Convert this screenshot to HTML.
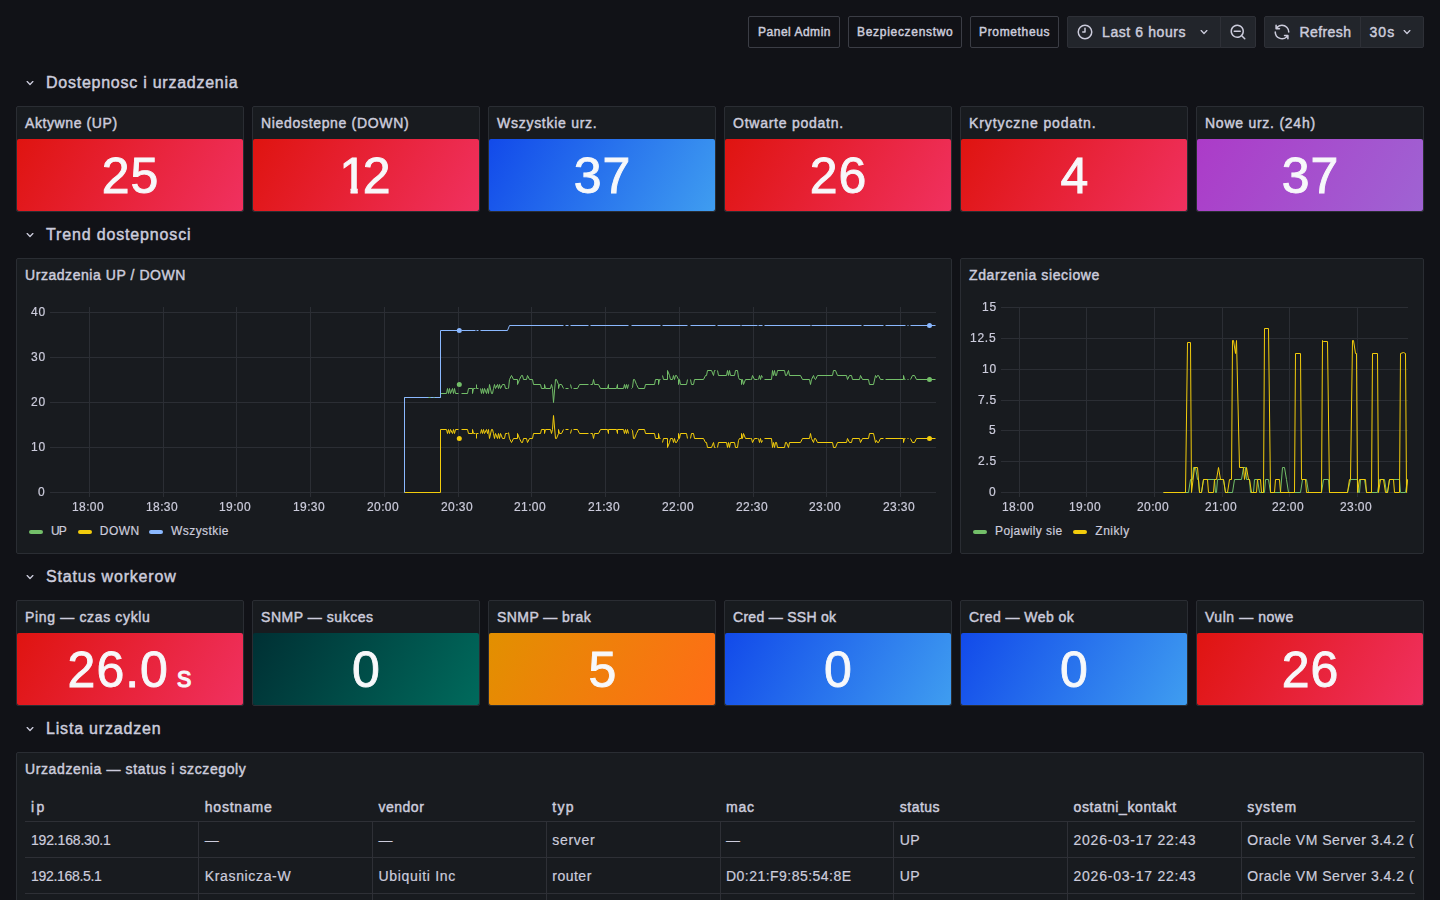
<!DOCTYPE html><html><head><meta charset="utf-8"><title>Dashboard</title><style>
*{box-sizing:border-box;margin:0;padding:0}
html,body{width:1440px;height:900px;overflow:hidden;background:#111217;
 font-family:"Liberation Sans",sans-serif;color:#ccccdc}
#root{position:relative;width:1440px;height:900px;overflow:hidden;background:#111217}
.t{position:absolute;white-space:nowrap;display:block}
.ax{will-change:transform;-webkit-text-stroke:0.2px currentColor}
.m{font-weight:400;-webkit-text-stroke:0.45px currentColor}
.r{font-weight:400;-webkit-text-stroke:0.2px currentColor}
.b{font-weight:700}
.panel{position:absolute;background:#181b1f;border:1px solid #2a2d33;border-radius:2px}
.fill{position:absolute;left:0;right:0;bottom:0;top:32px;border-radius:2px}
.big{-webkit-text-stroke:0.9px currentColor}
.btn{position:absolute;top:16px;height:32px;background:#22252b;border:1px solid #2e3037}
.lnk{position:absolute;top:16px;height:32px;border:1px solid #3b3d45;border-radius:2px}
svg{position:absolute;overflow:visible}
.ic{fill:#ccccdc}
</style></head><body><div id="root">
<div class="lnk" style="left:748px;width:92px"></div>
<div class="lnk" style="left:848px;width:114px"></div>
<div class="lnk" style="left:970px;width:89px"></div>
<span id="l1" class="t m" style="left:758px;top:23.00px;font-size:12px;line-height:18px;letter-spacing:0.51px;color:#ccccdc;">Panel Admin</span>
<span id="l2" class="t m" style="left:857px;top:23.00px;font-size:12px;line-height:18px;letter-spacing:0.698px;color:#ccccdc;">Bezpieczenstwo</span>
<span id="l3" class="t m" style="left:979px;top:23.00px;font-size:12px;line-height:18px;letter-spacing:0.656px;color:#ccccdc;">Prometheus</span>
<div class="btn" style="left:1067px;width:154px;border-radius:2px 0 0 2px"></div>
<div class="btn" style="left:1220px;width:36px;border-radius:0 2px 2px 0"></div>
<div class="btn" style="left:1264px;width:97px;border-radius:2px 0 0 2px"></div>
<div class="btn" style="left:1360px;width:64px;border-radius:0 2px 2px 0"></div>
<svg class="ic" style="left:1076.0px;top:23.0px" width="18" height="18" viewBox="0 0 24 24"><path d="M12,2A10,10,0,1,0,22,12,10.01114,10.01114,0,0,0,12,2Zm0,18a8,8,0,1,1,8-8A8.00917,8.00917,0,0,1,12,20ZM12,6a.99974.99974,0,0,0-1,1v4H9a1,1,0,0,0,0,2h3a.99974.99974,0,0,0,1-1V7A.99974.99974,0,0,0,12,6Z"/></svg>
<span id="tp" class="t m" style="left:1102px;top:22.00px;font-size:14px;line-height:20px;letter-spacing:0.59px;color:#ccccdc;">Last 6 hours</span>
<svg class="ic" style="left:1195.8px;top:24.299999999999997px" width="16" height="16" viewBox="0 0 24 24"><path d="M17,9.17a1,1,0,0,0-1.41,0L12,12.71,8.46,9.17a1,1,0,0,0-1.41,0,1,1,0,0,0,0,1.42l4.24,4.24a1,1,0,0,0,1.42,0L17,10.59A1,1,0,0,0,17,9.17Z"/></svg>
<svg class="ic" style="left:1229.0px;top:23.0px" width="18" height="18" viewBox="0 0 24 24"><path d="M21.71,20.29,18,16.61A9,9,0,1,0,16.61,18l3.68,3.68a1,1,0,0,0,1.42,0A1,1,0,0,0,21.71,20.29ZM11,18a7,7,0,1,1,7-7A7,7,0,0,1,11,18Zm4-8H7a1,1,0,0,0,0,2h8a1,1,0,0,0,0-2Z"/></svg>
<svg class="ic" style="left:1272.7px;top:23.0px" width="18" height="18" viewBox="0 0 24 24"><path d="M19.91,15.51H15.38a1,1,0,0,0,0,2h2.4A8,8,0,0,1,4,12a1,1,0,0,0-2,0,10,10,0,0,0,16.88,7.23V21a1,1,0,0,0,2,0V16.5A1,1,0,0,0,19.91,15.51ZM12,2A10,10,0,0,0,5.12,4.77V3a1,1,0,0,0-2,0V7.5a1,1,0,0,0,1,1h4.5a1,1,0,0,0,0-2H6.22A8,8,0,0,1,20,12a1,1,0,0,0,2,0A10,10,0,0,0,12,2Z"/></svg>
<span id="rf" class="t m" style="left:1299.5px;top:22.00px;font-size:14px;line-height:20px;letter-spacing:0.417px;color:#ccccdc;">Refresh</span>
<span id="iv" class="t m" style="left:1369.5px;top:22.00px;font-size:14px;line-height:20px;letter-spacing:1.05px;color:#ccccdc;">30s</span>
<svg class="ic" style="left:1399.3px;top:24.299999999999997px" width="16" height="16" viewBox="0 0 24 24"><path d="M17,9.17a1,1,0,0,0-1.41,0L12,12.71,8.46,9.17a1,1,0,0,0-1.41,0,1,1,0,0,0,0,1.42l4.24,4.24a1,1,0,0,0,1.42,0L17,10.59A1,1,0,0,0,17,9.17Z"/></svg>
<svg class="ic" style="left:22.0px;top:75.0px" width="16" height="16" viewBox="0 0 24 24"><path d="M17,9.17a1,1,0,0,0-1.41,0L12,12.71,8.46,9.17a1,1,0,0,0-1.41,0,1,1,0,0,0,0,1.42l4.24,4.24a1,1,0,0,0,1.42,0L17,10.59A1,1,0,0,0,17,9.17Z"/></svg>
<span id="r1" class="t m" style="left:46px;top:72.30px;font-size:16px;line-height:22px;letter-spacing:0.749px;color:#ccccdc;">Dostepnosc i urzadzenia</span>
<svg class="ic" style="left:22.0px;top:227.0px" width="16" height="16" viewBox="0 0 24 24"><path d="M17,9.17a1,1,0,0,0-1.41,0L12,12.71,8.46,9.17a1,1,0,0,0-1.41,0,1,1,0,0,0,0,1.42l4.24,4.24a1,1,0,0,0,1.42,0L17,10.59A1,1,0,0,0,17,9.17Z"/></svg>
<span id="r2" class="t m" style="left:46px;top:224.30px;font-size:16px;line-height:22px;letter-spacing:0.844px;color:#ccccdc;">Trend dostepnosci</span>
<svg class="ic" style="left:22.0px;top:569.0px" width="16" height="16" viewBox="0 0 24 24"><path d="M17,9.17a1,1,0,0,0-1.41,0L12,12.71,8.46,9.17a1,1,0,0,0-1.41,0,1,1,0,0,0,0,1.42l4.24,4.24a1,1,0,0,0,1.42,0L17,10.59A1,1,0,0,0,17,9.17Z"/></svg>
<span id="r3" class="t m" style="left:46px;top:566.30px;font-size:16px;line-height:22px;letter-spacing:0.82px;color:#ccccdc;">Status workerow</span>
<svg class="ic" style="left:22.0px;top:721.0px" width="16" height="16" viewBox="0 0 24 24"><path d="M17,9.17a1,1,0,0,0-1.41,0L12,12.71,8.46,9.17a1,1,0,0,0-1.41,0,1,1,0,0,0,0,1.42l4.24,4.24a1,1,0,0,0,1.42,0L17,10.59A1,1,0,0,0,17,9.17Z"/></svg>
<span id="r4" class="t m" style="left:46px;top:718.30px;font-size:16px;line-height:22px;letter-spacing:0.808px;color:#ccccdc;">Lista urzadzen</span>
<div class="panel" style="left:16px;top:106px;width:228px;height:106px"><div class="fill" style="background:linear-gradient(120deg,rgb(223,20,16),rgb(240,49,96))"></div></div>
<span id="s1t" class="t m" style="left:25px;top:112.80px;font-size:14px;line-height:20px;letter-spacing:0.592px;color:#ccccdc;">Aktywne (UP)</span>
<span id="s1v" class="t m big" style="left:-169.50px;width:600px;text-align:center;top:146px;font-size:50px;line-height:60px;color:#f7f8fa;letter-spacing:1px">25</span>
<div class="panel" style="left:252px;top:106px;width:228px;height:106px"><div class="fill" style="background:linear-gradient(120deg,rgb(223,20,16),rgb(240,49,96))"></div></div>
<span id="s2t" class="t m" style="left:261px;top:112.80px;font-size:14px;line-height:20px;letter-spacing:0.676px;color:#ccccdc;">Niedostepne (DOWN)</span>
<span id="s2v" class="t m big" style="left:65.50px;width:600px;text-align:center;top:146px;font-size:50px;line-height:60px;color:#f7f8fa;letter-spacing:1px"><span style="display:inline-block;letter-spacing:0;margin-right:-4.3px;clip-path:polygon(0 0,28px 0,28px 41.5px,18.4px 41.5px,18.4px 60px,11.2px 60px,11.2px 41.5px,0 41.5px)">1</span>2</span>
<div class="panel" style="left:488px;top:106px;width:228px;height:106px"><div class="fill" style="background:linear-gradient(120deg,rgb(18,74,234),rgb(63,157,240))"></div></div>
<span id="s3t" class="t m" style="left:497px;top:112.80px;font-size:14px;line-height:20px;letter-spacing:0.73px;color:#ccccdc;">Wszystkie urz.</span>
<span id="s3v" class="t m big" style="left:302.50px;width:600px;text-align:center;top:146px;font-size:50px;line-height:60px;color:#f7f8fa;letter-spacing:1px">37</span>
<div class="panel" style="left:724px;top:106px;width:228px;height:106px"><div class="fill" style="background:linear-gradient(120deg,rgb(223,20,16),rgb(240,49,96))"></div></div>
<span id="s4t" class="t m" style="left:733px;top:112.80px;font-size:14px;line-height:20px;letter-spacing:0.749px;color:#ccccdc;">Otwarte podatn.</span>
<span id="s4v" class="t m big" style="left:538.50px;width:600px;text-align:center;top:146px;font-size:50px;line-height:60px;color:#f7f8fa;letter-spacing:1px">26</span>
<div class="panel" style="left:960px;top:106px;width:228px;height:106px"><div class="fill" style="background:linear-gradient(120deg,rgb(223,20,16),rgb(240,49,96))"></div></div>
<span id="s5t" class="t m" style="left:969px;top:112.80px;font-size:14px;line-height:20px;letter-spacing:0.906px;color:#ccccdc;">Krytyczne podatn.</span>
<span id="s5v" class="t m big" style="left:775.00px;width:600px;text-align:center;top:146px;font-size:50px;line-height:60px;color:#f7f8fa;letter-spacing:1px">4</span>
<div class="panel" style="left:1196px;top:106px;width:228px;height:106px"><div class="fill" style="background:linear-gradient(120deg,rgb(172,59,200),rgb(159,99,211))"></div></div>
<span id="s6t" class="t m" style="left:1205px;top:112.80px;font-size:14px;line-height:20px;letter-spacing:0.749px;color:#ccccdc;">Nowe urz. (24h)</span>
<span id="s6v" class="t m big" style="left:1010.50px;width:600px;text-align:center;top:146px;font-size:50px;line-height:60px;color:#f7f8fa;letter-spacing:1px">37</span>
<div class="panel" style="left:16px;top:600px;width:228px;height:106px"><div class="fill" style="background:linear-gradient(120deg,rgb(223,20,16),rgb(240,49,96))"></div></div>
<span id="w1t" class="t m" style="left:25px;top:606.80px;font-size:14px;line-height:20px;letter-spacing:0.658px;color:#ccccdc;">Ping — czas cyklu</span>
<span id="w1v" class="t m big" style="left:-170.50px;width:600px;text-align:center;top:640px;font-size:50px;line-height:60px;color:#f7f8fa;letter-spacing:1px">26.0<span style="font-size:29px;margin-left:8px;letter-spacing:0">s</span></span>
<div class="panel" style="left:252px;top:600px;width:228px;height:106px"><div class="fill" style="background:linear-gradient(120deg,rgb(0,48,52),rgb(0,106,92))"></div></div>
<span id="w2t" class="t m" style="left:261px;top:606.80px;font-size:14px;line-height:20px;letter-spacing:0.542px;color:#ccccdc;">SNMP — sukces</span>
<span id="w2v" class="t m big" style="left:66.50px;width:600px;text-align:center;top:640px;font-size:50px;line-height:60px;color:#f7f8fa;letter-spacing:1px">0</span>
<div class="panel" style="left:488px;top:600px;width:228px;height:106px"><div class="fill" style="background:linear-gradient(120deg,rgb(226,144,0),rgb(255,108,23))"></div></div>
<span id="w3t" class="t m" style="left:497px;top:606.80px;font-size:14px;line-height:20px;letter-spacing:0.45px;color:#ccccdc;">SNMP — brak</span>
<span id="w3v" class="t m big" style="left:303.00px;width:600px;text-align:center;top:640px;font-size:50px;line-height:60px;color:#f7f8fa;letter-spacing:1px">5</span>
<div class="panel" style="left:724px;top:600px;width:228px;height:106px"><div class="fill" style="background:linear-gradient(120deg,rgb(18,74,234),rgb(63,157,240))"></div></div>
<span id="w4t" class="t m" style="left:733px;top:606.80px;font-size:14px;line-height:20px;letter-spacing:0.292px;color:#ccccdc;">Cred — SSH ok</span>
<span id="w4v" class="t m big" style="left:538.50px;width:600px;text-align:center;top:640px;font-size:50px;line-height:60px;color:#f7f8fa;letter-spacing:1px">0</span>
<div class="panel" style="left:960px;top:600px;width:228px;height:106px"><div class="fill" style="background:linear-gradient(120deg,rgb(18,74,234),rgb(63,157,240))"></div></div>
<span id="w5t" class="t m" style="left:969px;top:606.80px;font-size:14px;line-height:20px;letter-spacing:0.459px;color:#ccccdc;">Cred — Web ok</span>
<span id="w5v" class="t m big" style="left:774.50px;width:600px;text-align:center;top:640px;font-size:50px;line-height:60px;color:#f7f8fa;letter-spacing:1px">0</span>
<div class="panel" style="left:1196px;top:600px;width:228px;height:106px"><div class="fill" style="background:linear-gradient(120deg,rgb(223,20,16),rgb(240,49,96))"></div></div>
<span id="w6t" class="t m" style="left:1205px;top:606.80px;font-size:14px;line-height:20px;letter-spacing:0.55px;color:#ccccdc;">Vuln — nowe</span>
<span id="w6v" class="t m big" style="left:1010.50px;width:600px;text-align:center;top:640px;font-size:50px;line-height:60px;color:#f7f8fa;letter-spacing:1px">26</span>
<div class="panel" style="left:16px;top:258px;width:936px;height:296px"></div>
<div class="panel" style="left:960px;top:258px;width:464px;height:296px"></div>
<span id="c1t" class="t m" style="left:25px;top:264.80px;font-size:14px;line-height:20px;letter-spacing:0.553px;color:#ccccdc;">Urzadzenia UP / DOWN</span>
<span id="c2t" class="t m" style="left:969px;top:264.80px;font-size:14px;line-height:20px;letter-spacing:0.618px;color:#ccccdc;">Zdarzenia sieciowe</span>
<svg width="1440" height="900" style="left:0;top:0" viewBox="0 0 1440 900"><path d="M50,492.5H936M50,447.5H936M50,402.5H936M50,357.5H936M50,312.5H936M89.5,307V497M163.5,307V497M236.5,307V497M310.5,307V497M384.5,307V497M458.5,307V497M531.5,307V497M605.5,307V497M679.5,307V497M753.5,307V497M826.5,307V497M900.5,307V497" stroke="#2b2e34" stroke-width="1" fill="none" shape-rendering="crispEdges"/><path d="M404.5,492.5L404.5,397.5L440.5,397.5L440.5,393.5L446.5,393.5L447.5,388.5L448.5,393.5L449.5,388.5L450.5,393.5L452.5,388.5L453.5,393.5L454.5,388.5L455.5,393.5L458.5,393.5M461.5,393.5L467.5,393.5L468.5,388.5L472.5,388.5L472.5,393.5L473.5,388.5L475.5,388.5M476.5,384.5L476.5,388.5L478.5,388.5M480.5,388.5L481.5,393.5L482.5,388.5L483.5,393.5L484.5,388.5L486.5,393.5L487.5,388.5L488.5,393.5L489.5,384.5L491.5,393.5L492.5,393.5L493.5,388.5L494.5,384.5L495.5,388.5L497.5,384.5L498.5,388.5L499.5,384.5L500.5,388.5L502.5,384.5L504.5,384.5L505.5,388.5L507.5,388.5M508.5,388.5L509.5,379.5L511.5,375.5L513.5,379.5L517.5,379.5L517.5,384.5L519.5,379.5L521.5,375.5L522.5,375.5L523.5,379.5L526.5,379.5L527.5,375.5L529.5,379.5L532.5,379.5L533.5,384.5L540.5,384.5L541.5,388.5L544.5,388.5L544.5,384.5L545.5,388.5L550.5,388.5L551.5,384.5L552.5,388.5L553.5,402.5L555.5,379.5L556.5,379.5L558.5,384.5L558.5,388.5L559.5,384.5L561.5,384.5L563.5,388.5M565.5,388.5L568.5,388.5M570.5,384.5L571.5,388.5M573.5,388.5L577.5,388.5L579.5,384.5L588.5,384.5M590.5,384.5L592.5,384.5L593.5,379.5L594.5,384.5L598.5,384.5L600.5,388.5L607.5,388.5L608.5,384.5L608.5,388.5L616.5,388.5L617.5,384.5L617.5,388.5L623.5,388.5L624.5,384.5L625.5,388.5L626.5,384.5L627.5,388.5L628.5,384.5M631.5,388.5L632.5,387.5L633.5,379.5L634.5,379.5L636.5,384.5L638.5,388.5L644.5,388.5L645.5,384.5L654.5,384.5L655.5,379.5L658.5,379.5L658.5,384.5L659.5,379.5L660.5,379.5M662.5,375.5L663.5,379.5L667.5,379.5L667.5,370.5L669.5,375.5L670.5,379.5L672.5,379.5L673.5,375.5L674.5,379.5L675.5,375.5L676.5,375.5L678.5,379.5L678.5,384.5L679.5,379.5L680.5,384.5L686.5,384.5L687.5,379.5M690.5,379.5L691.5,384.5L693.5,384.5L694.5,379.5L703.5,379.5L705.5,375.5L706.5,375.5L707.5,370.5L711.5,370.5L713.5,375.5L714.5,370.5L715.5,370.5M717.5,370.5L718.5,375.5L726.5,375.5L727.5,370.5L728.5,375.5L729.5,370.5L730.5,375.5L734.5,375.5L735.5,370.5L737.5,370.5L738.5,377.5L739.5,379.5L741.5,379.5L741.5,384.5L742.5,379.5L743.5,384.5L745.5,379.5L750.5,379.5L751.5,379.5L752.5,375.5L754.5,379.5L757.5,379.5M758.5,379.5L759.5,375.5L760.5,379.5L761.5,375.5L762.5,377.5M764.5,379.5L771.5,379.5L772.5,370.5L773.5,375.5L774.5,370.5L775.5,375.5L776.5,375.5L777.5,370.5L784.5,370.5L785.5,375.5L786.5,375.5L788.5,370.5L789.5,375.5L800.5,375.5L802.5,379.5L809.5,379.5L810.5,384.5L811.5,379.5L813.5,375.5L814.5,378.5L815.5,379.5L817.5,375.5L832.5,375.5L833.5,370.5L835.5,370.5L837.5,375.5L846.5,375.5L847.5,379.5L849.5,375.5L851.5,375.5L852.5,379.5L859.5,379.5L860.5,375.5L862.5,379.5L868.5,379.5L869.5,384.5L873.5,384.5L875.5,375.5L876.5,377.5L877.5,375.5L878.5,375.5L880.5,379.5L883.5,379.5M885.5,379.5L903.5,379.5L903.5,375.5L904.5,379.5L905.5,379.5M907.5,379.5L908.5,379.5M910.5,379.5L912.5,375.5L914.5,375.5L916.5,379.5L935.5,379.5" stroke="#73bf69" stroke-width="1" fill="none" stroke-linejoin="round"/><path d="M404.5,492.5L440.5,492.5L440.5,429.5L446.5,429.5L447.5,433.5L448.5,429.5L449.5,433.5L450.5,429.5L452.5,433.5L453.5,429.5L454.5,433.5L455.5,429.5L458.5,429.5M461.5,429.5L467.5,429.5L468.5,433.5L472.5,433.5L472.5,429.5L473.5,433.5L475.5,433.5M476.5,438.5L476.5,433.5L478.5,433.5M480.5,433.5L481.5,429.5L482.5,433.5L483.5,429.5L484.5,433.5L486.5,429.5L487.5,433.5L488.5,429.5L489.5,438.5L491.5,429.5L492.5,429.5L493.5,433.5L494.5,438.5L495.5,433.5L497.5,438.5L498.5,433.5L499.5,438.5L500.5,433.5L502.5,438.5L504.5,438.5L505.5,433.5L507.5,433.5M508.5,432.5L509.5,438.5L511.5,442.5L513.5,438.5L517.5,438.5L517.5,433.5L519.5,438.5L521.5,442.5L522.5,442.5L523.5,438.5L526.5,438.5L527.5,442.5L529.5,438.5L532.5,438.5L533.5,433.5L540.5,433.5L541.5,429.5L544.5,429.5L544.5,433.5L545.5,429.5L550.5,429.5L551.5,433.5L552.5,429.5L553.5,415.5L555.5,438.5L556.5,438.5L558.5,433.5L558.5,429.5L559.5,433.5L561.5,433.5L563.5,429.5M565.5,429.5L568.5,429.5M570.5,433.5L571.5,429.5M573.5,429.5L577.5,429.5L579.5,433.5L588.5,433.5M590.5,433.5L592.5,433.5L593.5,438.5L594.5,433.5L598.5,433.5L600.5,429.5L607.5,429.5L608.5,433.5L608.5,429.5L616.5,429.5L617.5,433.5L617.5,429.5L623.5,429.5L624.5,433.5L625.5,429.5L626.5,433.5L627.5,429.5L628.5,433.5M631.5,429.5L632.5,430.5L633.5,438.5L634.5,438.5L636.5,433.5L638.5,429.5L644.5,429.5L645.5,433.5L654.5,433.5L655.5,438.5L658.5,438.5L658.5,433.5L659.5,438.5L660.5,438.5M662.5,442.5L663.5,438.5L667.5,438.5L667.5,447.5L669.5,442.5L670.5,438.5L672.5,438.5L673.5,442.5L674.5,438.5L675.5,442.5L676.5,442.5L678.5,438.5L678.5,433.5L679.5,438.5L680.5,433.5L686.5,433.5L687.5,438.5M690.5,438.5L691.5,433.5L693.5,433.5L694.5,438.5L703.5,438.5L705.5,442.5L706.5,442.5L707.5,447.5L711.5,447.5L713.5,442.5L714.5,447.5L715.5,447.5M717.5,447.5L718.5,442.5L726.5,442.5L727.5,447.5L728.5,442.5L729.5,447.5L730.5,442.5L734.5,442.5L735.5,447.5L737.5,447.5L738.5,440.5L739.5,438.5L741.5,438.5L741.5,433.5L742.5,438.5L743.5,433.5L745.5,438.5L750.5,438.5L751.5,438.5L752.5,442.5L754.5,438.5L757.5,438.5M758.5,438.5L759.5,442.5L760.5,438.5L761.5,442.5L762.5,440.5M764.5,438.5L771.5,438.5L772.5,447.5L773.5,442.5L774.5,447.5L775.5,442.5L776.5,442.5L777.5,447.5L784.5,447.5L785.5,442.5L786.5,442.5L788.5,447.5L789.5,442.5L800.5,442.5L802.5,438.5L809.5,438.5L810.5,433.5L811.5,438.5L813.5,442.5L814.5,438.5L815.5,438.5L817.5,442.5L832.5,442.5L833.5,447.5L835.5,447.5L837.5,442.5L846.5,442.5L847.5,438.5L849.5,442.5L851.5,442.5L852.5,438.5L859.5,438.5L860.5,442.5L862.5,438.5L868.5,438.5L869.5,433.5L873.5,433.5L875.5,442.5L876.5,440.5L877.5,442.5L878.5,442.5L880.5,438.5L883.5,438.5M885.5,438.5L903.5,438.5L903.5,442.5L904.5,438.5L905.5,438.5M907.5,438.5L908.5,438.5M910.5,438.5L912.5,442.5L914.5,442.5L916.5,438.5L935.5,438.5" stroke="#f2cc0c" stroke-width="1" fill="none" stroke-linejoin="round"/><path d="M404.5,492.5L404.5,397.5L428.5,397.5M430.5,397.5L433.5,397.5M434.5,397.5L440.5,397.5L440.5,330.5L458.5,330.5M461.5,330.5L475.5,330.5M476.5,330.5L478.5,330.5M480.5,330.5L507.5,330.5L509.5,325.5L563.5,325.5M565.5,325.5L568.5,325.5M570.5,325.5L588.5,325.5M590.5,325.5L628.5,325.5M631.5,325.5L660.5,325.5M662.5,325.5L687.5,325.5M690.5,325.5L715.5,325.5M717.5,325.5L740.5,325.5M741.5,325.5L757.5,325.5M758.5,325.5L762.5,325.5M764.5,325.5L810.5,325.5M811.5,325.5L861.5,325.5M863.5,325.5L883.5,325.5M885.5,325.5L905.5,325.5M907.5,325.5L908.5,325.5M910.5,325.5L935.5,325.5" stroke="#8ab8ff" stroke-width="1" fill="none" stroke-linejoin="round"/><circle cx="459.3" cy="384.5" r="2.5" fill="#73bf69"/><circle cx="459.3" cy="438.5" r="2.5" fill="#f2cc0c"/><circle cx="459.3" cy="330.5" r="2.5" fill="#8ab8ff"/><circle cx="929.5" cy="379.5" r="2.5" fill="#73bf69"/><circle cx="929.5" cy="438.5" r="2.5" fill="#f2cc0c"/><circle cx="929.5" cy="325.5" r="2.5" fill="#8ab8ff"/></svg>
<svg width="1440" height="900" style="left:0;top:0" viewBox="0 0 1440 900"><path d="M1001,492.5H1408M1001,461.5H1408M1001,430.5H1408M1001,400.5H1408M1001,369.5H1408M1001,338.5H1408M1001,307.5H1408M1019.5,307V497M1086.5,307V497M1154.5,307V497M1222.5,307V497M1289.5,307V497M1357.5,307V497" stroke="#2b2e34" stroke-width="1" fill="none" shape-rendering="crispEdges"/><path d="M1163.5,492.5L1188.5,492.5L1190.5,479.5L1192.5,479.5L1193.5,467.5L1195.5,467.5L1197.5,479.5L1198.5,479.5L1199.5,492.5L1201.5,492.5L1203.5,479.5L1214.5,479.5L1215.5,492.5L1216.5,492.5L1217.5,479.5L1223.5,479.5L1225.5,492.5L1232.5,492.5L1234.5,479.5L1241.5,479.5L1243.5,467.5L1245.5,467.5L1246.5,479.5L1249.5,479.5L1250.5,492.5L1253.5,492.5L1254.5,479.5L1257.5,479.5L1259.5,492.5L1264.5,492.5L1265.5,479.5L1268.5,479.5L1270.5,492.5L1280.5,492.5L1282.5,467.5L1284.5,467.5L1286.5,479.5L1288.5,492.5L1300.5,492.5L1302.5,479.5L1306.5,479.5L1308.5,492.5L1321.5,492.5L1323.5,479.5L1328.5,479.5L1329.5,492.5L1347.5,492.5L1350.5,479.5L1357.5,479.5L1358.5,492.5L1359.5,492.5L1360.5,479.5L1364.5,479.5L1366.5,492.5L1377.5,492.5L1379.5,479.5L1384.5,479.5L1386.5,492.5L1387.5,492.5L1389.5,479.5L1399.5,479.5L1400.5,492.5L1405.5,492.5L1407.5,479.5" stroke="#73bf69" stroke-width="1" fill="none" stroke-linejoin="round"/><path d="M1163.5,492.5L1185.5,492.5L1187.5,342.5L1190.5,342.5L1191.5,492.5L1194.5,467.5L1197.5,467.5L1199.5,492.5L1201.5,492.5L1203.5,479.5L1207.5,479.5L1208.5,492.5L1213.5,492.5L1214.5,479.5L1216.5,479.5L1218.5,467.5L1220.5,479.5L1223.5,479.5L1225.5,492.5L1227.5,492.5L1229.5,479.5L1231.5,479.5L1232.5,340.5L1233.5,340.5L1235.5,353.5L1236.5,340.5L1239.5,467.5L1243.5,467.5L1244.5,479.5L1246.5,467.5L1248.5,479.5L1249.5,479.5L1251.5,492.5L1256.5,492.5L1257.5,479.5L1260.5,479.5L1261.5,492.5L1263.5,492.5L1264.5,328.5L1268.5,328.5L1270.5,492.5L1274.5,492.5L1275.5,479.5L1279.5,479.5L1280.5,492.5L1294.5,492.5L1295.5,353.5L1300.5,353.5L1301.5,479.5L1305.5,479.5L1306.5,492.5L1321.5,492.5L1322.5,340.5L1323.5,341.5L1327.5,341.5L1329.5,492.5L1347.5,492.5L1349.5,479.5L1350.5,479.5L1352.5,340.5L1353.5,340.5L1355.5,353.5L1356.5,353.5L1357.5,492.5L1359.5,479.5L1365.5,479.5L1366.5,492.5L1371.5,492.5L1372.5,353.5L1377.5,353.5L1378.5,492.5L1380.5,479.5L1383.5,479.5L1385.5,492.5L1387.5,492.5L1389.5,479.5L1393.5,479.5L1394.5,492.5L1399.5,492.5L1400.5,353.5L1403.5,352.5L1405.5,353.5L1406.5,492.5L1407.5,479.5" stroke="#f2cc0c" stroke-width="1" fill="none" stroke-linejoin="round"/></svg>
<div style="position:absolute;left:29px;top:530px;width:14px;height:4px;border-radius:2px;background:#73bf69"></div>
<span id="lg1" class="t r" style="left:51px;top:521.50px;font-size:12px;line-height:18px;letter-spacing:-0.9px;color:#ccccdc;">UP</span>
<div style="position:absolute;left:78px;top:530px;width:14px;height:4px;border-radius:2px;background:#f2cc0c"></div>
<span id="lg2" class="t r" style="left:99.8px;top:521.50px;font-size:12px;line-height:18px;letter-spacing:0.5px;color:#ccccdc;">DOWN</span>
<div style="position:absolute;left:149px;top:530px;width:14px;height:4px;border-radius:2px;background:#8ab8ff"></div>
<span id="lg3" class="t r" style="left:171px;top:521.50px;font-size:12px;line-height:18px;letter-spacing:0.438px;color:#ccccdc;">Wszystkie</span>
<div style="position:absolute;left:973px;top:530px;width:14px;height:4px;border-radius:2px;background:#73bf69"></div>
<span id="lg4" class="t r" style="left:995px;top:521.50px;font-size:12px;line-height:18px;letter-spacing:0.408px;color:#ccccdc;">Pojawily sie</span>
<div style="position:absolute;left:1073px;top:530px;width:14px;height:4px;border-radius:2px;background:#f2cc0c"></div>
<span id="lg5" class="t r" style="left:1095.3px;top:521.50px;font-size:12px;line-height:18px;letter-spacing:0.5px;color:#ccccdc;">Znikly</span>
<div class="panel" style="left:16px;top:752px;width:1408px;height:400px"></div>
<span id="tt" class="t m" style="left:25px;top:758.80px;font-size:14px;line-height:20px;letter-spacing:0.617px;color:#ccccdc;">Urzadzenia — status i szczegoly</span>
<div style="position:absolute;left:25px;top:821px;width:1390px;height:1px;background:#2e3036"></div>
<div style="position:absolute;left:25px;top:857px;width:1390px;height:1px;background:#2e3036"></div>
<div style="position:absolute;left:25px;top:893px;width:1390px;height:1px;background:#2e3036"></div>
<div style="position:absolute;left:198px;top:822px;width:1px;height:80px;background:#2e3036"></div>
<div style="position:absolute;left:372px;top:822px;width:1px;height:80px;background:#2e3036"></div>
<div style="position:absolute;left:546px;top:822px;width:1px;height:80px;background:#2e3036"></div>
<div style="position:absolute;left:720px;top:822px;width:1px;height:80px;background:#2e3036"></div>
<div style="position:absolute;left:893px;top:822px;width:1px;height:80px;background:#2e3036"></div>
<div style="position:absolute;left:1067px;top:822px;width:1px;height:80px;background:#2e3036"></div>
<div style="position:absolute;left:1241px;top:822px;width:1px;height:80px;background:#2e3036"></div>
<span id="th0" class="t m" style="left:31.0px;top:796.60px;font-size:14px;line-height:20px;letter-spacing:2.3px;color:#ccccdc;">ip</span>
<span id="th1" class="t m" style="left:204.75px;top:796.60px;font-size:14px;line-height:20px;letter-spacing:0.785px;color:#ccccdc;">hostname</span>
<span id="th2" class="t m" style="left:378.5px;top:796.60px;font-size:14px;line-height:20px;letter-spacing:0.5px;color:#ccccdc;">vendor</span>
<span id="th3" class="t m" style="left:552.25px;top:796.60px;font-size:14px;line-height:20px;letter-spacing:1.25px;color:#ccccdc;">typ</span>
<span id="th4" class="t m" style="left:726.0px;top:796.60px;font-size:14px;line-height:20px;letter-spacing:0.75px;color:#ccccdc;">mac</span>
<span id="th5" class="t m" style="left:899.75px;top:796.60px;font-size:14px;line-height:20px;letter-spacing:0.5px;color:#ccccdc;">status</span>
<span id="th6" class="t m" style="left:1073.5px;top:796.60px;font-size:14px;line-height:20px;letter-spacing:0.607px;color:#ccccdc;">ostatni_kontakt</span>
<span id="th7" class="t m" style="left:1247.25px;top:796.60px;font-size:14px;line-height:20px;letter-spacing:0.9px;color:#ccccdc;">system</span>
<span id="td0_0" class="t r" style="left:31.0px;top:829.70px;font-size:14px;line-height:20px;letter-spacing:-0.173px;color:#ccccdc;">192.168.30.1</span>
<span id="td0_1" class="t r" style="left:204.75px;top:829.70px;font-size:14px;line-height:20px;letter-spacing:0px;color:#ccccdc;">—</span>
<span id="td0_2" class="t r" style="left:378.5px;top:829.70px;font-size:14px;line-height:20px;letter-spacing:0px;color:#ccccdc;">—</span>
<span id="td0_3" class="t r" style="left:552.25px;top:829.70px;font-size:14px;line-height:20px;letter-spacing:0.7px;color:#ccccdc;">server</span>
<span id="td0_4" class="t r" style="left:726.0px;top:829.70px;font-size:14px;line-height:20px;letter-spacing:0px;color:#ccccdc;">—</span>
<span id="td0_5" class="t r" style="left:899.75px;top:829.70px;font-size:14px;line-height:20px;letter-spacing:0.5px;color:#ccccdc;">UP</span>
<span id="td0_6" class="t r" style="left:1073.5px;top:829.70px;font-size:14px;line-height:20px;letter-spacing:0.766px;color:#ccccdc;">2026-03-17 22:43</span>
<span id="td0_7" class="t r" style="left:1247.25px;top:829.70px;font-size:14px;line-height:20px;letter-spacing:0.5px;color:#ccccdc;">Oracle VM Server 3.4.2 (</span>
<span id="td1_0" class="t r" style="left:31.0px;top:865.70px;font-size:14px;line-height:20px;letter-spacing:-0.31px;color:#ccccdc;">192.168.5.1</span>
<span id="td1_1" class="t r" style="left:204.75px;top:865.70px;font-size:14px;line-height:20px;letter-spacing:0.65px;color:#ccccdc;">Krasnicza-W</span>
<span id="td1_2" class="t r" style="left:378.5px;top:865.70px;font-size:14px;line-height:20px;letter-spacing:0.683px;color:#ccccdc;">Ubiquiti Inc</span>
<span id="td1_3" class="t r" style="left:552.25px;top:865.70px;font-size:14px;line-height:20px;letter-spacing:0.5px;color:#ccccdc;">router</span>
<span id="td1_4" class="t r" style="left:726.0px;top:865.70px;font-size:14px;line-height:20px;letter-spacing:0.471px;color:#ccccdc;">D0:21:F9:85:54:8E</span>
<span id="td1_5" class="t r" style="left:899.75px;top:865.70px;font-size:14px;line-height:20px;letter-spacing:0.5px;color:#ccccdc;">UP</span>
<span id="td1_6" class="t r" style="left:1073.5px;top:865.70px;font-size:14px;line-height:20px;letter-spacing:0.766px;color:#ccccdc;">2026-03-17 22:43</span>
<span id="td1_7" class="t r" style="left:1247.25px;top:865.70px;font-size:14px;line-height:20px;letter-spacing:0.5px;color:#ccccdc;">Oracle VM Server 3.4.2 (</span>
<span id="y1_0" class="t r ax" style="right:1394.2px;top:483.20px;font-size:12px;line-height:18px;letter-spacing:0px;color:#ccccdc;letter-spacing:0.75px;">0</span>
<span id="y1_10" class="t r ax" style="right:1394.2px;top:438.20px;font-size:12px;line-height:18px;letter-spacing:0px;color:#ccccdc;letter-spacing:0.75px;">10</span>
<span id="y1_20" class="t r ax" style="right:1394.2px;top:393.20px;font-size:12px;line-height:18px;letter-spacing:0px;color:#ccccdc;letter-spacing:0.75px;">20</span>
<span id="y1_30" class="t r ax" style="right:1394.2px;top:348.20px;font-size:12px;line-height:18px;letter-spacing:0px;color:#ccccdc;letter-spacing:0.75px;">30</span>
<span id="y1_40" class="t r ax" style="right:1394.2px;top:303.20px;font-size:12px;line-height:18px;letter-spacing:0px;color:#ccccdc;letter-spacing:0.75px;">40</span>
<span id="x1_0" class="t r ax" style="left:-211.7px;width:600px;text-align:center;top:497.70px;font-size:12px;line-height:18px;letter-spacing:0px;color:#ccccdc;letter-spacing:0.4px;">18:00</span>
<span id="x1_1" class="t r ax" style="left:-137.7px;width:600px;text-align:center;top:497.70px;font-size:12px;line-height:18px;letter-spacing:0px;color:#ccccdc;letter-spacing:0.4px;">18:30</span>
<span id="x1_2" class="t r ax" style="left:-64.69999999999999px;width:600px;text-align:center;top:497.70px;font-size:12px;line-height:18px;letter-spacing:0px;color:#ccccdc;letter-spacing:0.4px;">19:00</span>
<span id="x1_3" class="t r ax" style="left:9.300000000000011px;width:600px;text-align:center;top:497.70px;font-size:12px;line-height:18px;letter-spacing:0px;color:#ccccdc;letter-spacing:0.4px;">19:30</span>
<span id="x1_4" class="t r ax" style="left:83.30000000000001px;width:600px;text-align:center;top:497.70px;font-size:12px;line-height:18px;letter-spacing:0px;color:#ccccdc;letter-spacing:0.4px;">20:00</span>
<span id="x1_5" class="t r ax" style="left:157.3px;width:600px;text-align:center;top:497.70px;font-size:12px;line-height:18px;letter-spacing:0px;color:#ccccdc;letter-spacing:0.4px;">20:30</span>
<span id="x1_6" class="t r ax" style="left:230.29999999999995px;width:600px;text-align:center;top:497.70px;font-size:12px;line-height:18px;letter-spacing:0px;color:#ccccdc;letter-spacing:0.4px;">21:00</span>
<span id="x1_7" class="t r ax" style="left:304.29999999999995px;width:600px;text-align:center;top:497.70px;font-size:12px;line-height:18px;letter-spacing:0px;color:#ccccdc;letter-spacing:0.4px;">21:30</span>
<span id="x1_8" class="t r ax" style="left:378.29999999999995px;width:600px;text-align:center;top:497.70px;font-size:12px;line-height:18px;letter-spacing:0px;color:#ccccdc;letter-spacing:0.4px;">22:00</span>
<span id="x1_9" class="t r ax" style="left:452.29999999999995px;width:600px;text-align:center;top:497.70px;font-size:12px;line-height:18px;letter-spacing:0px;color:#ccccdc;letter-spacing:0.4px;">22:30</span>
<span id="x1_10" class="t r ax" style="left:525.3px;width:600px;text-align:center;top:497.70px;font-size:12px;line-height:18px;letter-spacing:0px;color:#ccccdc;letter-spacing:0.4px;">23:00</span>
<span id="x1_11" class="t r ax" style="left:599.3px;width:600px;text-align:center;top:497.70px;font-size:12px;line-height:18px;letter-spacing:0px;color:#ccccdc;letter-spacing:0.4px;">23:30</span>
<span id="y2_0" class="t r ax" style="right:443.20000000000005px;top:483.20px;font-size:12px;line-height:18px;letter-spacing:0px;color:#ccccdc;letter-spacing:0.75px;">0</span>
<span id="y2_2_5" class="t r ax" style="right:443.20000000000005px;top:452.20px;font-size:12px;line-height:18px;letter-spacing:0px;color:#ccccdc;letter-spacing:0.75px;">2.5</span>
<span id="y2_5" class="t r ax" style="right:443.20000000000005px;top:421.20px;font-size:12px;line-height:18px;letter-spacing:0px;color:#ccccdc;letter-spacing:0.75px;">5</span>
<span id="y2_7_5" class="t r ax" style="right:443.20000000000005px;top:391.20px;font-size:12px;line-height:18px;letter-spacing:0px;color:#ccccdc;letter-spacing:0.75px;">7.5</span>
<span id="y2_10" class="t r ax" style="right:443.20000000000005px;top:360.20px;font-size:12px;line-height:18px;letter-spacing:0px;color:#ccccdc;letter-spacing:0.75px;">10</span>
<span id="y2_12_5" class="t r ax" style="right:443.20000000000005px;top:329.20px;font-size:12px;line-height:18px;letter-spacing:0px;color:#ccccdc;letter-spacing:0.75px;">12.5</span>
<span id="y2_15" class="t r ax" style="right:443.20000000000005px;top:298.20px;font-size:12px;line-height:18px;letter-spacing:0px;color:#ccccdc;letter-spacing:0.75px;">15</span>
<span id="x2_0" class="t r ax" style="left:718.3px;width:600px;text-align:center;top:497.70px;font-size:12px;line-height:18px;letter-spacing:0px;color:#ccccdc;letter-spacing:0.4px;">18:00</span>
<span id="x2_1" class="t r ax" style="left:785.3px;width:600px;text-align:center;top:497.70px;font-size:12px;line-height:18px;letter-spacing:0px;color:#ccccdc;letter-spacing:0.4px;">19:00</span>
<span id="x2_2" class="t r ax" style="left:853.3px;width:600px;text-align:center;top:497.70px;font-size:12px;line-height:18px;letter-spacing:0px;color:#ccccdc;letter-spacing:0.4px;">20:00</span>
<span id="x2_3" class="t r ax" style="left:921.3px;width:600px;text-align:center;top:497.70px;font-size:12px;line-height:18px;letter-spacing:0px;color:#ccccdc;letter-spacing:0.4px;">21:00</span>
<span id="x2_4" class="t r ax" style="left:988.3px;width:600px;text-align:center;top:497.70px;font-size:12px;line-height:18px;letter-spacing:0px;color:#ccccdc;letter-spacing:0.4px;">22:00</span>
<span id="x2_5" class="t r ax" style="left:1056.3px;width:600px;text-align:center;top:497.70px;font-size:12px;line-height:18px;letter-spacing:0px;color:#ccccdc;letter-spacing:0.4px;">23:00</span>
</div></body></html>
